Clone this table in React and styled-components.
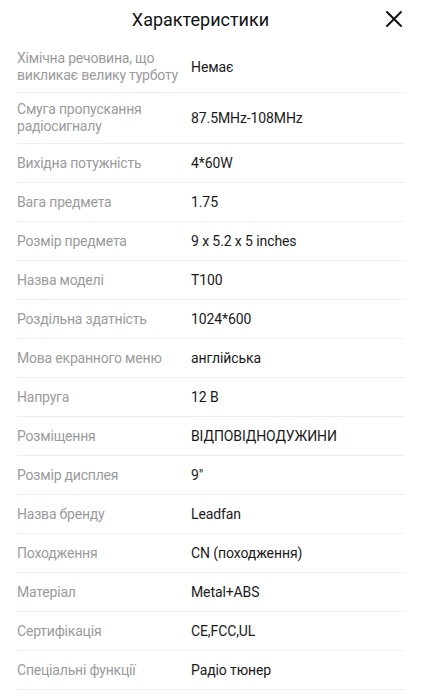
import React from 'react';
import styled, { createGlobalStyle } from 'styled-components';

const GlobalStyle = createGlobalStyle`
    body{
        margin: 0;
        background: #ffffff;
        font-family: Roboto, 'Noto Sans', sans-serif;
    }
`

const Sheet = styled.div`
    width: 421px;
    min-height: 699px;
    background: #ffffff;
    display: flex;
    flex-direction: column;
`

const Header = styled.div`
    position: relative;
    height: 42px;
    display: flex;
    align-items: center;
    justify-content: center;

    .title{
        font-size: 18px;
        color: #111111;
        margin-top: -4px;
        margin-right: 20px;
    }
`

const Close = styled.button`
    position: absolute;
    right: 16px;
    top: 8px;
    width: 22px;
    height: 22px;
    padding: 0;
    border: none;
    background: none;
    display: flex;
    align-items: center;
    justify-content: center;
`

const List = styled.div`
    display: flex;
    flex-direction: column;
    padding: 0 17px;
`

const Row = styled.div`
    display: flex;
    align-items: center;
    gap: 4px;
    min-height: 39px;
    box-sizing: border-box;
    padding: 8px 0;
    border-bottom: 1px solid #eeeeee;

    .label{
        width: 170px;
        flex-shrink: 0;
        font-size: 14px;
        letter-spacing: -0.2px;
        line-height: 17px;
        color: #9b9b9b;
    }

    .value{
        font-size: 14px;
        letter-spacing: -0.1px;
        line-height: 17px;
        color: #1a1a1a;
    }
`

const specs = [
    ["Хімічна речовина, що викликає велику турботу", "Немає"],
    ["Смуга пропускання радіосигналу", "87.5MHz-108MHz"],
    ["Вихідна потужність", "4*60W"],
    ["Вага предмета", "1.75"],
    ["Розмір предмета", "9 x 5.2 x 5 inches"],
    ["Назва моделі", "T100"],
    ["Роздільна здатність", "1024*600"],
    ["Мова екранного меню", "англійська"],
    ["Напруга", "12 В"],
    ["Розміщення", "ВІДПОВІДНОДУЖИНИ"],
    ["Розмір дисплея", "9\""],
    ["Назва бренду", "Leadfan"],
    ["Походження", "CN (походження)"],
    ["Матеріал", "Metal+ABS"],
    ["Сертифікація", "CE,FCC,UL"],
    ["Спеціальні функції", "Радіо тюнер"],
]

const App = () => {
    return(
        <Sheet>
            <GlobalStyle />
            <Header>
                <span className="title">Характеристики</span>
                <Close aria-label="close">
                    <svg width="18" height="18" viewBox="0 0 18 18">
                        <path d="M2 2 L16 16 M16 2 L2 16" stroke="#111" strokeWidth="2" strokeLinecap="round" />
                    </svg>
                </Close>
            </Header>
            <List>
                {specs.map(([label, value]) => (
                    <Row key={label}>
                        <span className="label">{label}</span>
                        <span className="value">{value}</span>
                    </Row>
                ))}
            </List>
        </Sheet>
    )
}

export default App;
